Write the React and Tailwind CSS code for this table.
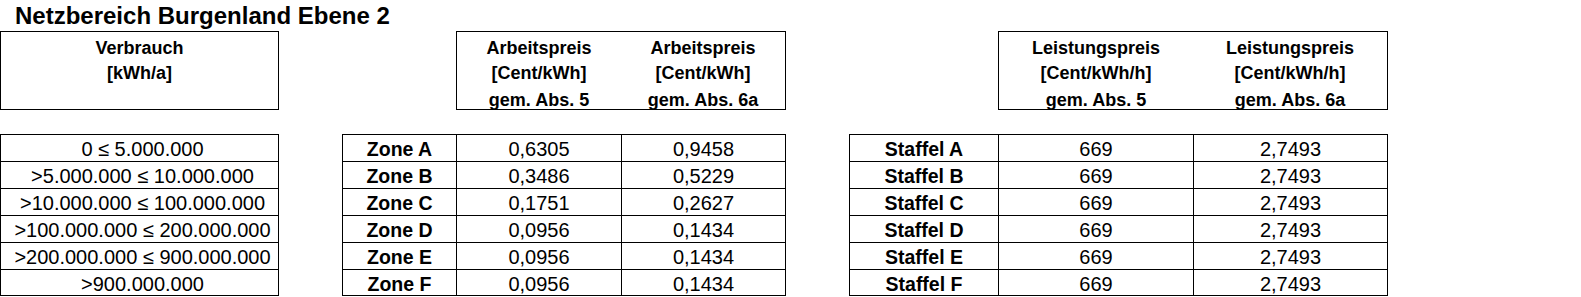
import React from "react";

const verbrauch = [
  "0 ≤ 5.000.000",
  ">5.000.000 ≤ 10.000.000",
  ">10.000.000 ≤ 100.000.000",
  ">100.000.000 ≤ 200.000.000",
  ">200.000.000 ≤ 900.000.000",
  ">900.000.000",
];

const zones = [
  ["Zone A", "0,6305", "0,9458"],
  ["Zone B", "0,3486", "0,5229"],
  ["Zone C", "0,1751", "0,2627"],
  ["Zone D", "0,0956", "0,1434"],
  ["Zone E", "0,0956", "0,1434"],
  ["Zone F", "0,0956", "0,1434"],
];

const staffeln = ["A", "B", "C", "D", "E", "F"];

function Row({ last, children }) {
  return (
    <div
      className={
        "flex " +
        (last ? "h-[25px]" : "h-[27px] border-b border-black")
      }
    >
      {children}
    </div>
  );
}

function HeaderCol({ lines }) {
  return (
    <div className="flex-1 flex flex-col items-center pt-[5px] text-[18px] font-bold leading-[23px]">
      {lines[0] && <div className="whitespace-nowrap">{lines[0]}</div>}
      {lines[1] && <div className="whitespace-nowrap mt-[2px]">{lines[1]}</div>}
      {lines[2] && <div className="whitespace-nowrap mt-[4px]">{lines[2]}</div>}
    </div>
  );
}

export default function App() {
  return (
    <div className="w-[1581px] h-[297px] bg-white text-black font-['Liberation_Sans',Arial,sans-serif] overflow-hidden">
      <div className="h-[31px] pl-[15px] text-[24px] font-bold leading-[31px] whitespace-nowrap">
        Netzbereich Burgenland Ebene 2
      </div>

      <div className="flex h-[79px]">
        <div className="w-[279px] border border-black flex">
          <HeaderCol lines={["Verbrauch", "[kWh/a]"]} />
        </div>
        <div className="ml-[177px] w-[330px] border border-black flex">
          <HeaderCol lines={["Arbeitspreis", "[Cent/kWh]", "gem. Abs. 5"]} />
          <HeaderCol lines={["Arbeitspreis", "[Cent/kWh]", "gem. Abs. 6a"]} />
        </div>
        <div className="ml-[212px] w-[390px] border border-black flex">
          <HeaderCol lines={["Leistungspreis", "[Cent/kWh/h]", "gem. Abs. 5"]} />
          <HeaderCol lines={["Leistungspreis", "[Cent/kWh/h]", "gem. Abs. 6a"]} />
        </div>
      </div>

      <div className="flex mt-[24px] text-[20px] leading-[26px]">
        <div className="w-[279px] border border-black">
          {verbrauch.map((v, i) => (
            <Row key={i} last={i === 5}>
              <div className="flex-1 text-center whitespace-nowrap pt-[1px] pl-[6px]">{v}</div>
            </Row>
          ))}
        </div>

        <div className="ml-[63px] w-[444px] border border-black">
          {zones.map((z, i) => (
            <Row key={i} last={i === 5}>
              <div className="w-[114px] border-r border-black text-center font-bold text-[19.5px] pt-[1px]">
                {z[0]}
              </div>
              <div className="w-[165px] border-r border-black text-center pt-[1px]">
                {z[1]}
              </div>
              <div className="w-[163px] text-center pt-[1px]">{z[2]}</div>
            </Row>
          ))}
        </div>

        <div className="ml-[63px] w-[539px] border border-black">
          {staffeln.map((s, i) => (
            <Row key={i} last={i === 5}>
              <div className="w-[149px] border-r border-black text-center font-bold text-[19.5px] pt-[1px]">
                Staffel {s}
              </div>
              <div className="w-[195px] border-r border-black text-center pt-[1px]">
                669
              </div>
              <div className="w-[193px] text-center pt-[1px]">2,7493</div>
            </Row>
          ))}
        </div>
      </div>
    </div>
  );
}
